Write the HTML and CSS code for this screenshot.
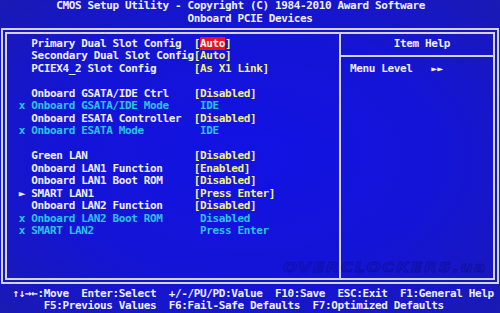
FILE: index.html
```html
<!DOCTYPE html>
<html lang="en">
<head>
    <meta charset="UTF-8">
    <title>CMOS Setup Utility - Onboard PCIE Devices</title>
    <link rel="stylesheet" href="styles.css">
</head>
<body>
<div class="screen">
    <div class="title">CMOS Setup Utility - Copyright (C) 1984-2010 Award Software</div>
    <div class="subtitle">Onboard PCIE Devices</div>

    <div class="frame">
        <div class="items">
            <div class="row"><span class="mark"></span><span class="label">Primary Dual Slot Config</span><span class="value">[<span class="sel">Auto</span>]</span></div>
            <div class="row"><span class="mark"></span><span class="label">Secondary Dual Slot Config</span><span class="value">[Auto]</span></div>
            <div class="row"><span class="mark"></span><span class="label">PCIEX4_2 Slot Config</span><span class="value">[As X1 Link]</span></div>
            <div class="row"></div>
            <div class="row"><span class="mark"></span><span class="label">Onboard GSATA/IDE Ctrl</span><span class="value">[Disabled]</span></div>
            <div class="row off"><span class="mark">x</span><span class="label">Onboard GSATA/IDE Mode</span><span class="value plain">IDE</span></div>
            <div class="row"><span class="mark"></span><span class="label">Onboard ESATA Controller</span><span class="value">[Disabled]</span></div>
            <div class="row off"><span class="mark">x</span><span class="label">Onboard ESATA Mode</span><span class="value plain">IDE</span></div>
            <div class="row"></div>
            <div class="row"><span class="mark"></span><span class="label">Green LAN</span><span class="value">[Disabled]</span></div>
            <div class="row"><span class="mark"></span><span class="label">Onboard LAN1 Function</span><span class="value">[Enabled]</span></div>
            <div class="row"><span class="mark"></span><span class="label">Onboard LAN1 Boot ROM</span><span class="value">[Disabled]</span></div>
            <div class="row"><span class="mark">&#9658;</span><span class="label">SMART LAN1</span><span class="value">[Press Enter]</span></div>
            <div class="row"><span class="mark"></span><span class="label">Onboard LAN2 Function</span><span class="value">[Disabled]</span></div>
            <div class="row off"><span class="mark">x</span><span class="label">Onboard LAN2 Boot ROM</span><span class="value plain">Disabled</span></div>
            <div class="row off"><span class="mark">x</span><span class="label">SMART LAN2</span><span class="value plain">Press Enter</span></div>
        </div>

        <div class="help">
            <div class="help-title">Item Help</div>
            <div class="help-rule"></div>
            <div class="help-line">Menu Level   <span class="arrows">&#9658;&#9658;</span></div>
        </div>

        <div class="watermark">OVERCLOCKERS.ua</div>
    </div>

    <div class="keys">↑↓→←:Move  Enter:Select  +/-/PU/PD:Value  F10:Save  ESC:Exit  F1:General Help</div>
    <div class="keys second">F5:Previous Values  F6:Fail-Safe Defaults  F7:Optimized Defaults</div>
</div>
</body>
</html>
```

FILE: styles.css
```css
* {
    box-sizing: border-box;
    margin: 0;
    padding: 0;
}

:root {
    --c: 6.25px;
    --r: 12.5px;
    --line: #d4d4e8;
}

body {
    width: 500px;
    height: 313px;
    overflow: hidden;
    background: #1616c4;
}

.screen {
    width: 500px;
    height: 313px;
    background: radial-gradient(ellipse at 50% 50%, #1212e4 0%, #1414d6 55%, #1a1ab4 100%);
    font-family: "DejaVu Sans Mono", "Liberation Mono", monospace;
    font-weight: bold;
    font-size: 11px;
    letter-spacing: -0.372px;
    line-height: var(--r);
    color: #eeeefc;
}

.title,
.subtitle,
.row span,
.help-title,
.help-line,
.keys {
    white-space: pre;
}

.title {
    height: var(--r);
    padding-left: calc(var(--c) * 9);
}

.subtitle {
    height: var(--r);
    padding-left: calc(var(--c) * 30);
}

.frame {
    position: relative;
    display: flex;
    height: 256px;
    margin: 3px 1px 0;
    border: 6px double var(--line);
}

.items {
    width: 334px;
    padding: 3.5px 0 0 11.75px;
    border-right: 2px solid var(--line);
}

.row {
    display: flex;
    height: var(--r);
}

.mark {
    width: calc(var(--c) * 2);
    flex: none;
}

.label {
    width: calc(var(--c) * 26);
    flex: none;
}

.value {
    color: #f2f27a;
}

.value.plain {
    padding-left: var(--c);
}

.sel {
    background: #e8121c;
    color: #fff4f4;
}

.off,
.off .value {
    color: #2cc4ea;
}

.help {
    flex: 1;
    padding-top: 3.5px;
}

.help-title {
    height: var(--r);
    padding-left: 52.75px;
}

.help-rule {
    height: var(--r);
    display: flex;
    align-items: center;
}

.help-rule::before {
    content: "";
    width: 100%;
    height: 2px;
    background: var(--line);
}

.help-line {
    height: var(--r);
    padding-left: 9px;
}

.arrows {
    font-size: 10px;
    letter-spacing: 0;
}

.watermark {
    position: absolute;
    right: 6px;
    bottom: 2px;
    font-family: "DejaVu Sans", sans-serif;
    font-style: italic;
    font-size: 17px;
    letter-spacing: 1.5px;
    line-height: 18px;
    color: rgba(20, 20, 170, 0.25);
    -webkit-text-stroke: 1px rgba(8, 8, 120, 0.45);
    transform: scaleY(0.85);
}

.keys {
    height: var(--r);
    margin-top: 3.5px;
    padding-left: calc(var(--c) * 2);
}

.keys.second {
    margin-top: 0;
    padding-left: calc(var(--c) * 7);
}
```
